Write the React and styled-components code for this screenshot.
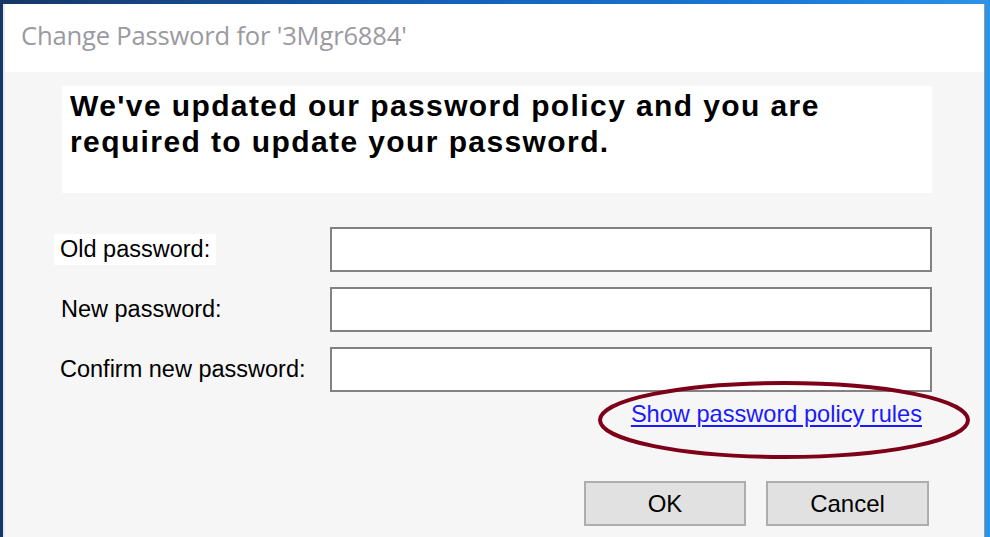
import React from "react";
import styled, { createGlobalStyle } from "styled-components";

const Global = createGlobalStyle`
  html, body { margin: 0; padding: 0; height: 100%; overflow: hidden; }
  #root { height: 100%; }
`;

const Desktop = styled.div`
  width: 990px;
  height: 537px;
  box-sizing: border-box;
  padding: 4px 5px 0 3px;
  display: flex;
  background: linear-gradient(90deg, #163766 0%, #1560b8 45%, #1b7ad6 80%, #2b93e8 100%);
  overflow: hidden;
`;

const Window = styled.div`
  flex: 1;
  display: flex;
  flex-direction: column;
  border-left: 2px solid #e8ecf0;
  border-right: 1px solid #9a9a9a;
  background: #f6f6f6;
`;

const TitleBar = styled.div`
  height: 68px;
  display: flex;
  align-items: center;
  padding: 0 0 6px 16px;
  box-sizing: border-box;
  background: #ffffff;
  font-family: "Open Sans", "Noto Sans", sans-serif;
  font-size: 25.6px;
  color: #9b9aa0;
  letter-spacing: -0.2px;
`;

const Body = styled.div`
  flex: 1;
  display: flex;
  flex-direction: column;
  padding: 14px 0 0 0;
`;

const MessagePanel = styled.div`
  margin-left: 57px;
  width: 870px;
  height: 107px;
  box-sizing: border-box;
  padding: 2px 0 0 8px;
  background: #ffffff;
  font-family: "Liberation Sans", Arial, sans-serif;
  font-weight: bold;
  font-size: 30px;
  letter-spacing: 1.4px;
  line-height: 36px;
  color: #000;
`;

const Form = styled.div`
  margin-top: 34px;
  display: grid;
  grid-template-columns: 270px 602px;
  row-gap: 15px;
  padding-left: 55px;
`;

const Label = styled.div`
  display: flex;
  align-items: center;
  height: 45px;
  font-family: "Liberation Sans", Arial, sans-serif;
  font-size: 23.5px;
  color: #000;
  span {
    padding: 2px ${p => (p.$highlight ? "6px" : "0")} 2px ${p => (p.$highlight ? "6px" : "0")};
    margin-left: ${p => (p.$highlight ? (p.$indent || 0) - 6 : p.$indent || 0)}px;
    background: ${p => (p.$highlight ? "#ffffff" : "transparent")};
  }
`;

const Input = styled.input`
  height: 45px;
  width: 602px;
  box-sizing: border-box;
  border: 2px solid #828282;
  background: #ffffff;
  outline: none;
  margin: 0;
  padding: 0 6px;
  font-size: 20px;
`;

const LinkRow = styled.div`
  position: relative;
  margin-top: 8px;
  display: flex;
  justify-content: flex-end;
  padding-right: 62px;
`;

const PolicyLink = styled.a`
  position: relative;
  z-index: 1;
  font-family: "Liberation Sans", Arial, sans-serif;
  font-size: 23.6px;
  line-height: 28px;
  color: #1a1aff;
  text-decoration: underline;
  text-underline-offset: 3px;
  cursor: pointer;
`;

const Ellipse = styled.svg`
  position: absolute;
  left: 589px;
  top: -22px;
  width: 380px;
  height: 84px;
  pointer-events: none;
`;

const ButtonRow = styled.div`
  margin-top: 53px;
  display: flex;
  justify-content: flex-end;
  gap: 20px;
  padding-right: 55px;
`;

const Button = styled.button`
  width: ${p => p.$w || 162}px;
  height: 45px;
  box-sizing: border-box;
  border: 2px solid #adadad;
  background: #e1e1e1;
  font-family: "Liberation Sans", Arial, sans-serif;
  font-size: 24px;
  color: #000;
  padding: 0;
`;

export default function App() {
  return (
    <>
      <Global />
      <Desktop>
        <Window>
          <TitleBar>Change Password for '3Mgr6884'</TitleBar>
          <Body>
            <MessagePanel>
              We've updated our password policy and you are
              <br />
              required to update your password.
            </MessagePanel>
            <Form>
              <Label $highlight $indent={0}><span>Old password:</span></Label>
              <Input type="password" />
              <Label $indent={1}><span>New password:</span></Label>
              <Input type="password" />
              <Label $indent={0}><span>Confirm new password:</span></Label>
              <Input type="password" />
            </Form>
            <LinkRow>
              <PolicyLink>Show password policy rules</PolicyLink>
              <Ellipse viewBox="0 0 380 84">
                <ellipse cx="190" cy="42" rx="184" ry="37" fill="none" stroke="#7e0018" strokeWidth="4" />
              </Ellipse>
            </LinkRow>
            <ButtonRow>
              <Button $w={162}>OK</Button>
              <Button $w={163}>Cancel</Button>
            </ButtonRow>
          </Body>
        </Window>
      </Desktop>
    </>
  );
}
